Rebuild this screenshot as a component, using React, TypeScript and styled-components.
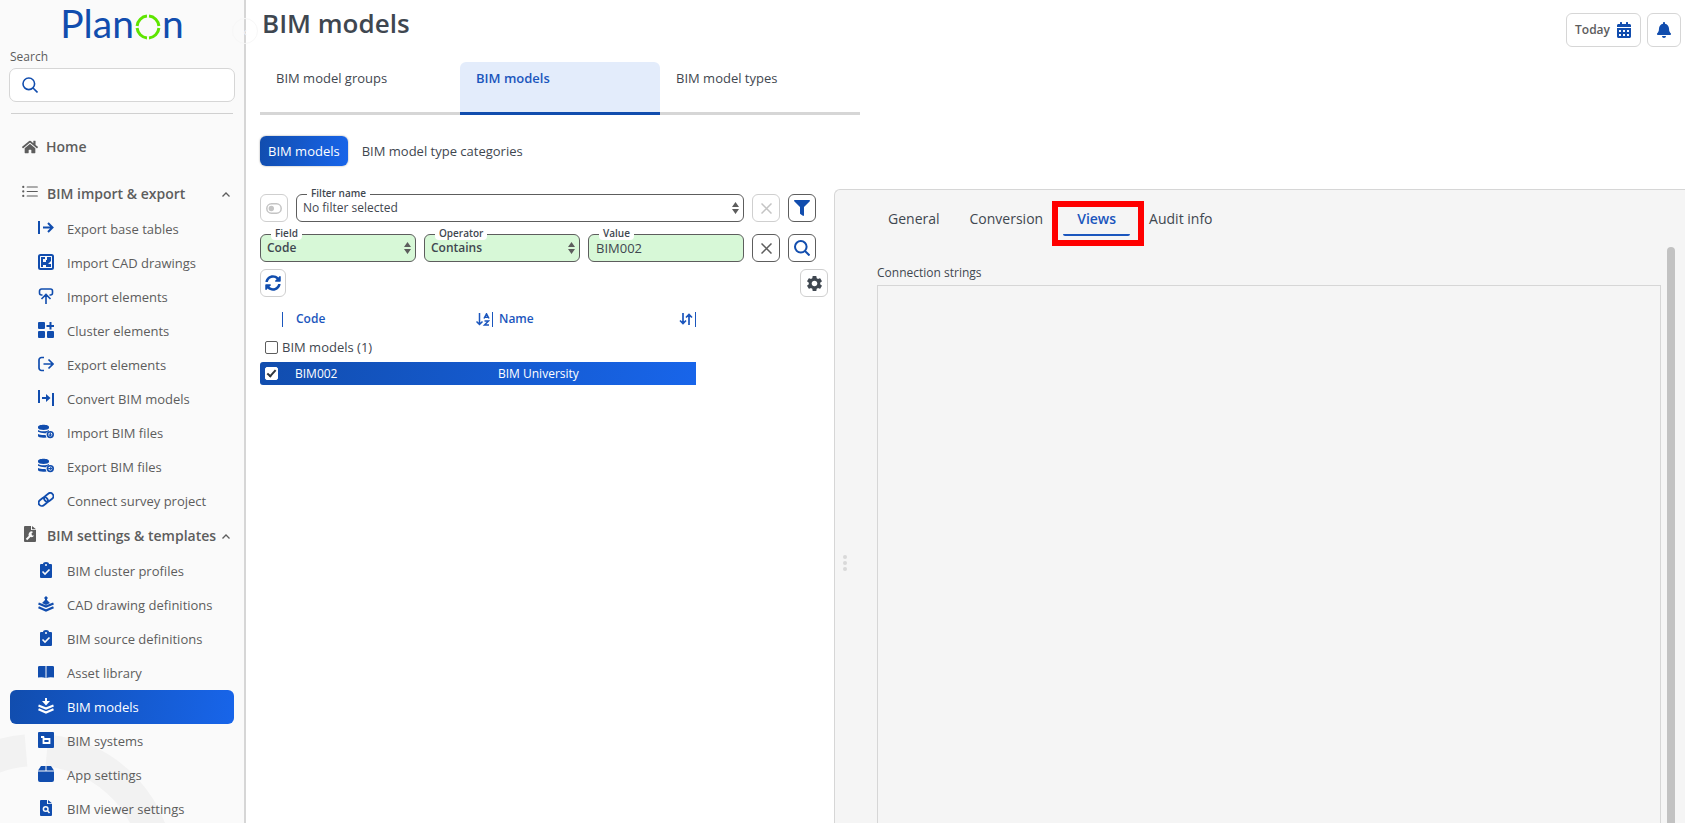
import React from 'react';
import styled, { createGlobalStyle, css } from 'styled-components';
import { FaBell, FaCalendarAlt, FaFilter, FaHome, FaSyncAlt } from 'react-icons/fa';
import { BsListUl } from 'react-icons/bs';
import { MdSettings } from 'react-icons/md';

const blue = '#114dae';
const gradient = 'linear-gradient(100deg, #114dae, #1865ea)';

const GlobalStyle = createGlobalStyle`
  *, *::before, *::after { box-sizing: border-box; }
  body { margin: 0; background: #fff; color: #3f4750; font: 13px/18px "Open Sans", "Liberation Sans", sans-serif; }
  button, input, select, textarea { font: inherit; color: inherit; margin: 0; }
  a { color: inherit; text-decoration: none; }
  svg { display: block; flex: none; }
`;

const Shell = styled.div`
  display: grid;
  grid-template-columns: 246px minmax(0, 1fr);
  height: 100vh;
  overflow: hidden;
`;

/* ---------- sidebar ---------- */
const Sidebar = styled.aside`
  position: relative;
  z-index: 0;
  min-height: 0;
  padding: 0 9px;
  background: #fafafa;
  border-right: 2px solid #d6d6d6;
  color: #5d5d5d;
`;
const Watermark = styled.svg`
  position: absolute;
  z-index: -1;
  left: 0;
  bottom: 0;
`;
const Collapse = styled.button`
  position: absolute;
  top: 18px;
  right: -14px;
  width: 26px;
  height: 26px;
  padding: 0;
  border: 1px solid #f7f7f7;
  border-radius: 50%;
  background: transparent;
  color: #f0f0f8;
  line-height: 20px;
`;
const Logo = styled.a`
  display: flex;
  justify-content: center;
  height: 48px;
  color: ${blue};
  font: 39px/47px Lato, sans-serif;
`;
const RingHolder = styled.span`
  padding: 14px 1px 0;
`;
const SearchLabel = styled.label`
  display: block;
  margin: 0 0 2px 1px;
  font-size: 12px;
`;
const SearchBox = styled.div`
  display: flex;
  align-items: center;
  gap: 8px;
  height: 34px;
  padding: 0 12px;
  border: 1px solid #d6d6d6;
  border-radius: 7px;
  background: #fff;
  color: ${blue};
  input { flex: 1; min-width: 0; border: 0; outline: 0; background: none; }
`;
const Divider = styled.hr`
  margin: 11px 2px 15px;
  border: 0;
  border-top: 1px solid #d0d0d0;
`;
const HomeLink = styled.a`
  display: flex;
  align-items: center;
  gap: 8px;
  height: 36px;
  margin-bottom: 11px;
  padding-left: 13px;
  font-size: 14px;
  font-weight: 600;
`;
const GroupButton = styled.button`
  display: flex;
  align-items: center;
  width: 100%;
  height: 36px;
  padding: 0 5px 0 12px;
  border: 0;
  background: none;
  font-size: 14px;
  font-weight: 600;
  text-align: left;
  white-space: nowrap;
`;
const GroupIcon = styled.span`
  display: flex;
  justify-content: center;
  width: 18px;
  margin: 0 8px 4px 0;
`;
const GroupName = styled.span`
  flex: 1;
`;
const NavList = styled.ul`
  margin: 0 1px;
  padding: 0;
  list-style: none;
`;
const NavLink = styled.a<{ $active?: boolean }>`
  display: flex;
  align-items: center;
  gap: 13px;
  height: 34px;
  padding-left: 28px;
  border-radius: 6px;
  white-space: nowrap;
  svg { color: ${blue}; margin-bottom: 2px; }
  ${(p) => p.$active && css`
    background: ${gradient};
    color: #fff;
    font-weight: 500;
    svg { color: #fff; }
  `}
`;

/* ---------- header ---------- */
const Main = styled.main`
  display: flex;
  flex-direction: column;
  min-height: 0;
`;
const Header = styled.header`
  display: flex;
  justify-content: space-between;
  height: 62px;
  padding: 5px 4px 0 16px;
`;
const Title = styled.h1`
  margin: 0;
  font-size: 26px;
  line-height: 36px;
  font-weight: 600;
`;
const HeaderActions = styled.div`
  display: flex;
  gap: 6px;
  padding-top: 8px;
`;
const HeaderButton = styled.button`
  display: flex;
  align-items: center;
  justify-content: center;
  gap: 6px;
  min-width: 34px;
  height: 34px;
  padding: 0 8px;
  border: 1px solid #d6d6d6;
  border-radius: 6px;
  background: #fff;
  color: #5d5d5d;
  font-size: 12px;
  font-weight: 600;
  svg { color: ${blue}; }
`;
const Tabs = styled.nav`
  display: flex;
  margin-left: 14px;
`;
const Tab = styled.a<{ $active?: boolean }>`
  width: 200px;
  height: 53px;
  padding: 7px 16px;
  border-bottom: 3px solid #d6d6d6;
  ${(p) => p.$active && css`
    border-color: ${blue};
    border-radius: 6px 6px 0 0;
    background: #e3ecfb;
    color: #1b56bd;
    font-weight: 600;
  `}
`;
const SubTabs = styled.nav`
  display: flex;
  gap: 6px;
  margin: 21px 0 23px 14px;
`;
const SubTab = styled.a<{ $active?: boolean }>`
  height: 30px;
  padding: 6px 8px;
  border-radius: 6px;
  ${(p) => p.$active && css`
    background: ${gradient};
    box-shadow: 0 0 2px #999;
    color: #fff;
    font-weight: 500;
  `}
`;
const Split = styled.div`
  display: grid;
  grid-template-columns: 588px minmax(0, 1fr);
  flex: 1;
  min-height: 0;
`;

/* ---------- list pane ---------- */
const ListPane = styled.section`
  padding: 5px 6px 0 14px;
`;
const FilterRow = styled.div`
  display: flex;
  gap: 8px;
  margin: 0 12px 12px 0;
`;
const SquareButton = styled.button<{ $light?: boolean; $width?: number }>`
  display: flex;
  align-items: center;
  justify-content: center;
  flex: none;
  width: ${(p) => p.$width ?? 28}px;
  height: 28px;
  padding: 0;
  border: 1px solid ${(p) => (p.$light ? '#cfcfcf' : '#5d5d5d')};
  border-radius: 6px;
  background: #fff;
  color: ${blue};
`;
const Field = styled.div<{ $green?: boolean }>`
  position: relative;
  flex: 1 1 0;
  min-width: 0;
  height: 28px;
  label {
    position: absolute;
    top: -8px;
    left: 11px;
    padding: 0 4px;
    border-radius: 4px;
    background: #fff;
    font-size: 10px;
    font-weight: 600;
    line-height: 14px;
  }
  select, input {
    display: block;
    width: 100%;
    height: 28px;
    padding: 0 6px;
    border: 1px solid #5d5d5d;
    border-radius: 6px;
    background: ${(p) => (p.$green ? '#d7f8d7' : '#fff')};
    font-size: 12px;
    font-weight: ${(p) => (p.$green ? 600 : 400)};
    outline: 0;
    appearance: none;
  }
  input { padding: 0 7px; font-size: 13px; font-weight: 400; }
  svg { position: absolute; right: 5px; top: 8px; pointer-events: none; }
`;
const ToolRow = styled.div`
  display: flex;
  justify-content: space-between;
  margin: -5px 0 9px;
`;
const ListTable = styled.table`
  width: 436px;
  border-collapse: collapse;
  table-layout: fixed;
  font-size: 12px;
  th { padding: 0; color: #1b56bd; font-weight: 600; text-align: left; height: 26px; }
  td { padding: 0; }
`;
const HeadCell = styled.div<{ $pad?: number }>`
  display: flex;
  align-items: center;
  justify-content: space-between;
  height: 15px;
  padding: 0 2px 0 ${(p) => p.$pad ?? 0}px;
  border-right: 1px solid #1b56bd;
`;
const GroupRow = styled.tr`
  height: 30px;
  font-size: 13px;
  label { display: flex; align-items: center; gap: 4px; padding-left: 5px; }
`;
const SelectedRow = styled.tr`
  height: 23px;
  background: ${gradient};
  color: #fff;
  font-weight: 500;
  td { padding-left: 12px; }
  td:first-child { padding-left: 5px; border-radius: 3px 0 0 3px; }
  td:last-child { padding-left: 5px; }
`;
const Check = styled.input`
  display: block;
  width: 13px;
  height: 13px;
  border: 1px solid #5d5d5d;
  border-radius: 2px;
  background: #fff;
  appearance: none;
  &:checked {
    border-color: #fff;
    background: #fff;
  }
  &:checked::before {
    content: '';
    display: block;
    width: 9px;
    height: 5px;
    margin: 2px 1px;
    border: solid #30363c;
    border-width: 0 0 2px 2px;
    transform: rotate(-48deg);
  }
`;

/* ---------- detail pane ---------- */
const DetailPane = styled.section`
  display: grid;
  grid-template-columns: 42px minmax(0, 1fr) 24px;
  grid-template-rows: 57px minmax(0, 1fr);
  border: solid #d6d6d6;
  border-width: 1px 0 0 1px;
  border-radius: 6px 0 0 0;
  background: #f5f5f5;
`;
const Splitter = styled.div`
  grid-row: 1 / 3;
  display: flex;
  flex-direction: column;
  align-items: center;
  gap: 2px;
  width: 20px;
  padding-top: 365px;
  i { width: 4px; height: 4px; border-radius: 50%; background: #d9d9d9; }
`;
const DetailTabs = styled.nav`
  grid-column: 2 / 4;
  display: flex;
  gap: 2px;
  padding: 16px 0 0;
  margin-left: -3px;
  font-size: 14px;
`;
const DetailTab = styled.a<{ $active?: boolean }>`
  position: relative;
  height: 30px;
  padding: 4px 14px;
  white-space: nowrap;
  ${(p) => p.$active && css`
    margin: 0 3px 0 4px;
    border-bottom: 2px solid #1b56bd;
    border-radius: 2px;
    color: #1b56bd;
    font-weight: 600;
  `}
`;
const Highlight = styled.span`
  position: absolute;
  top: -5px;
  left: -11px;
  right: -14px;
  height: 45px;
  border: 6px solid #f00;
  pointer-events: none;
`;
const DetailBody = styled.div`
  display: flex;
  flex-direction: column;
  padding-top: 17px;
  label { font-size: 12px; line-height: 18px; margin-bottom: 3px; }
  textarea {
    flex: 1;
    width: 100%;
    border: 1px solid #d6d6d6;
    border-bottom: 0;
    background: transparent;
    outline: 0;
    resize: none;
  }
`;
const Scrollbar = styled.div`
  width: 8px;
  margin-left: 6px;
  border-radius: 4px 4px 0 0;
  background: #c2c2c2;
`;

/* ---------- icons ---------- */
const Icon = ({ children }: { children: React.ReactNode }) => (
  <svg width="16" height="16" viewBox="0 0 16 16" fill="none" stroke="currentColor" strokeWidth="2" aria-hidden="true">
    {children}
  </svg>
);
const solid = { fill: 'currentColor', stroke: 'none' };

const ExportBaseIcon = () => (
  <Icon><path d="M1 1v13M5 7.500h9M10 3 14.500 7.500 10 12" /></Icon>
);
const CadIcon = () => (
  <Icon>
    <rect x="1" y="1" width="14" height="14" rx="1.5" />
    <path {...solid} d="M3 3h4v2H5v3h3V6h1V3h4v4l-3 3h3v3H8v-2H5v2H3z" />
  </Icon>
);
const ImportElementsIcon = () => (
  <Icon>
    <path strokeWidth="1.6" d="M4.5 7H3.500a2 2 0 0 1-2-2V3a2 2 0 0 1 2-2h9a2 2 0 0 1 2 2v2a2 2 0 0 1-2 2h-1M8 16V6M3.500 11 8 6.500l4.500 4.500" />
  </Icon>
);
const ClusterIcon = () => (
  <Icon>
    <path {...solid} d="M1 0h5q1 0 1 1v5q0 1-1 1H1q-1 0-1-1V1q0-1 1-1zM1 9h5q1 0 1 1v5q0 1-1 1H1q-1 0-1-1v-5q0-1 1-1zM10 9h5q1 0 1 1v5q0 1-1 1h-5q-1 0-1-1v-5q0-1 1-1z" />
    <path d="M12.500 0v7.500M8.500 4H16" />
  </Icon>
);
const ExportElementsIcon = () => (
  <Icon><path strokeWidth="1.700" d="M6 1.500H3.500a2.500 2.500 0 0 0-2.500 2.500v8a2.500 2.500 0 0 0 2.500 2.500H6M5.500 8H15M10.500 3.500 15 8l-4.500 4.500" /></Icon>
);
const ConvertIcon = () => (
  <Icon>
    <path d="M1 0v13M15 3v13" />
    <path {...solid} d="M4 7h4V4l4.500 4L8 12V9H4z" />
  </Icon>
);
const DatabaseIcon = ({ down }: { down?: boolean }) => (
  <Icon>
    <path {...solid} d="M0 3c0-3 11-3 11 0v1c0 2.500-11 2.500-11 0zM0 6c2 1.800 9 1.800 11 0v1.200Q8.500 7.500 8 9.200Q3 9.500 0 7.800zM0 10c2 1 5 1.300 7.500 1l1 2.500C4 14 0 13.500 0 12z" />
    <circle cx="12.300" cy="10.600" r="2.900" strokeWidth="1.600" />
    <path {...solid} d={down ? 'M11.700 8.500h1.200v2h1.400l-2 2.300-2-2.300h1.400z' : 'M10.200 10h2V8.600l2.300 2-2.300 2v-1.400h-2z'} />
  </Icon>
);
const ChainIcon = () => (
  <Icon>
    <g transform="rotate(-38 8 7.500)" strokeWidth="1.800">
      <rect x="-.5" y="4.300" width="10" height="6.400" rx="3.200" />
      <rect x="6.500" y="4.300" width="10" height="6.400" rx="3.200" />
    </g>
  </Icon>
);
const FileWrenchIcon = () => (
  <Icon>
    <path {...solid} d="M3 0h6v4h5v11q0 1-1 1H3q-1 0-1-1V1q0-1 1-1zM10 0l4 3.300h-4z" />
    <path d="m4.500 13.500 5-5" stroke="#fafafa" />
    <path {...solid} fill="#fafafa" d="M11 6a2.800 2.800 0 1 0 1 3.500H9.500V7.500z" />
  </Icon>
);
const ClipboardIcon = () => (
  <Icon>
    <path {...solid} d="M3 2h2q0-2 3-2t3 2h2q1 0 1 1v12q0 1-1 1H3q-1 0-1-1V3q0-1 1-1z" />
    <circle cx="8" cy="3" r="1" fill="#fafafa" stroke="none" />
    <path d="m4.500 9.500 2.500 2.500L11.500 7.500" stroke="#fafafa" strokeWidth="1.600" />
  </Icon>
);
const LayersIcon = ({ up }: { up?: boolean }) => (
  <Icon>
    <path {...solid} d={up ? 'M8 0l2 2-1 1v1l3 3-4 2-4-2 3-3V3L6 2z' : 'M7 0h2v3h3L8 7.500 4 3h3z'} />
    <path strokeWidth="2.200" d="m.5 7.500 7.500 3 7.500-3M.5 11.200l7.500 3.300 7.500-3.300" />
  </Icon>
);
const BookIcon = () => (
  <Icon><path {...solid} d="M1.500 2h6v12q-2-1-7.500-.500V3q0-1 1.500-1zM8.500 2h6Q16 2 16 3v10.500q-5.500-.500-7.500.500z" /></Icon>
);
const SystemIcon = () => (
  <Icon>
    <rect {...solid} width="16" height="16" rx="1" />
    <path d="M3 5h3M5.500 4.500V11h6V7H6" stroke="#fff" strokeWidth="1.800" />
  </Icon>
);
const BoxIcon = () => (
  <Icon><path {...solid} d="M3 0h4.500v4.500H0zM8.500 0H13l3 4.500H8.500zM0 5.500h16V14q0 2-2 2H2q-2 0-2-2z" /></Icon>
);
const FileSearchIcon = () => (
  <Icon>
    <path {...solid} d="M3 0h6v4h5v11q0 1-1 1H3q-1 0-1-1V1q0-1 1-1zM10 0l4 3.300h-4z" />
    <circle cx="7.700" cy="9" r="2.300" stroke="#fafafa" strokeWidth="1.500" />
    <path d="m9.500 10.800 2 2.200" stroke="#fafafa" strokeWidth="1.500" />
  </Icon>
);
const ChevronUp = () => (
  <svg width="8" height="5" viewBox="0 0 8 5" fill="none" stroke="currentColor" strokeWidth="1.300"><path d="M.5 4.500 4 1l3.500 3.500" /></svg>
);
const Arrows = () => (
  <svg width="7" height="12" viewBox="0 0 7 12" fill="#5d5d5d"><path d="M0 5 3.500 0 7 5zM0 7h7l-3.500 5z" /></svg>
);
const Cross = ({ color }: { color: string }) => (
  <svg width="11" height="11" viewBox="0 0 11 11" stroke={color} strokeWidth="1.500"><path d="m.5.500 10 10m0-10-10 10" /></svg>
);
const ToggleIcon = () => (
  <svg width="16" height="11" viewBox="0 0 16 11" fill="none" stroke="#c4c4c4" strokeWidth="1.500">
    <rect x=".8" y=".8" width="14.400" height="9.400" rx="4.700" /><circle cx="5.300" cy="5.500" r="2.700" fill="#c4c4c4" stroke="none" />
  </svg>
);
const MagnifierIcon = ({ thin }: { thin?: boolean }) => (
  <Icon>
    <g strokeWidth={thin ? 1.6 : 2}><circle cx="6.800" cy="6.800" r="5.800" /><path d="m11 11 4.500 4.500" /></g>
  </Icon>
);
const SortAZ = () => (
  <svg width="14" height="13" viewBox="0 0 14 13" fill="none" stroke="currentColor" strokeWidth="1.500">
    <path d="M3.500 0v11M.5 8.500l3 3 3-3M8 5.500 10.500.800 13 5.500M9 4.200h3M8.500 8h4l-4 4h4.500" />
  </svg>
);
const SortBoth = () => (
  <svg width="14" height="12" viewBox="0 0 14 12" fill="none" stroke="currentColor" strokeWidth="1.700">
    <path d="M4 0v10.500M1 7.500l3 3 3-3M10 12V1.500M7 4.500l3-3 3 3" />
  </svg>
);
const LogoRing = () => (
  <svg width="26" height="26" viewBox="0 0 26 26" fill="none" stroke="#5ee500" strokeWidth="3">
    <path d="M14 2.100a11 11 0 0 1 9.900 9.900M23.900 14a11 11 0 0 1-9.900 9.900M12 23.900a11 11 0 0 1-9.900-9.900M2.100 12a11 11 0 0 1 9.900-9.900" />
  </svg>
);

const importExport: [string, React.ReactNode][] = [
  ['Export base tables', <ExportBaseIcon />],
  ['Import CAD drawings', <CadIcon />],
  ['Import elements', <ImportElementsIcon />],
  ['Cluster elements', <ClusterIcon />],
  ['Export elements', <ExportElementsIcon />],
  ['Convert BIM models', <ConvertIcon />],
  ['Import BIM files', <DatabaseIcon down />],
  ['Export BIM files', <DatabaseIcon />],
  ['Connect survey project', <ChainIcon />],
];
const settings: [string, React.ReactNode][] = [
  ['BIM cluster profiles', <ClipboardIcon />],
  ['CAD drawing definitions', <LayersIcon up />],
  ['BIM source definitions', <ClipboardIcon />],
  ['Asset library', <BookIcon />],
  ['BIM models', <LayersIcon />],
  ['BIM systems', <SystemIcon />],
  ['App settings', <BoxIcon />],
  ['BIM viewer settings', <FileSearchIcon />],
];

type NavGroupProps = {
  name: string;
  icon: React.ReactNode;
  items: [string, React.ReactNode][];
  active?: string;
};
const NavGroup = ({ name, icon, items, active }: NavGroupProps) => (
  <>
    <GroupButton>
      <GroupIcon>{icon}</GroupIcon>
      <GroupName>{name}</GroupName>
      <ChevronUp />
    </GroupButton>
    <NavList>
      {items.map(([text, itemIcon]) => (
        <li key={text}>
          <NavLink href="#" $active={text === active}>{itemIcon}{text}</NavLink>
        </li>
      ))}
    </NavList>
  </>
);

export default function App() {
  return (
    <Shell>
      <GlobalStyle />
      <Sidebar>
        <Watermark width="180" height="90" viewBox="0 0 180 90" fill="none" stroke="#f2f2f2" strokeWidth="32">
          <path d="M26 17.500A122 122 0 0 0-86 139M47 17.500A122 122 0 0 1 158 139" />
        </Watermark>
        <Collapse aria-label="Collapse menu">‹</Collapse>
        <Logo href="#" aria-label="Planon">Plan<RingHolder><LogoRing /></RingHolder>n</Logo>
        <SearchLabel htmlFor="search">Search</SearchLabel>
        <SearchBox><MagnifierIcon thin /><input id="search" /></SearchBox>
        <Divider />
        <HomeLink href="#"><FaHome size={16} />Home</HomeLink>
        <NavGroup name="BIM import & export" icon={<BsListUl size={18} />} items={importExport} />
        <NavGroup name="BIM settings & templates" icon={<FileWrenchIcon />} items={settings} active="BIM models" />
      </Sidebar>
      <Main>
        <Header>
          <Title>BIM models</Title>
          <HeaderActions>
            <HeaderButton>Today<FaCalendarAlt size={16} /></HeaderButton>
            <HeaderButton aria-label="Notifications"><FaBell size={16} /></HeaderButton>
          </HeaderActions>
        </Header>
        <Tabs>
          <Tab href="#">BIM model groups</Tab>
          <Tab href="#" $active>BIM models</Tab>
          <Tab href="#">BIM model types</Tab>
        </Tabs>
        <SubTabs>
          <SubTab href="#" $active>BIM models</SubTab>
          <SubTab href="#">BIM model type categories</SubTab>
        </SubTabs>
        <Split>
          <ListPane>
            <FilterRow>
              <SquareButton $light aria-label="Toggle filter"><ToggleIcon /></SquareButton>
              <Field>
                <select id="filter"><option>No filter selected</option></select>
                <label htmlFor="filter">Filter name</label><Arrows />
              </Field>
              <SquareButton $light aria-label="Clear filter" disabled><Cross color="#c4c4c4" /></SquareButton>
              <SquareButton aria-label="Filter"><FaFilter size={16} /></SquareButton>
            </FilterRow>
            <FilterRow>
              <Field $green>
                <select id="field"><option>Code</option></select>
                <label htmlFor="field">Field</label><Arrows />
              </Field>
              <Field $green>
                <select id="operator"><option>Contains</option></select>
                <label htmlFor="operator">Operator</label><Arrows />
              </Field>
              <Field $green>
                <input id="value" defaultValue="BIM002" />
                <label htmlFor="value">Value</label>
              </Field>
              <SquareButton aria-label="Clear condition"><Cross color="#5d5d5d" /></SquareButton>
              <SquareButton aria-label="Search"><MagnifierIcon /></SquareButton>
            </FilterRow>
            <ToolRow>
              <SquareButton $light $width={26} aria-label="Refresh"><FaSyncAlt size={16} /></SquareButton>
              <SquareButton $light aria-label="Settings"><MdSettings size={19} color="#3f4750" /></SquareButton>
            </ToolRow>
            <ListTable>
              <colgroup><col style={{ width: 23 }} /><col style={{ width: 210 }} /><col /></colgroup>
              <thead>
                <tr>
                  <th><HeadCell /></th>
                  <th><HeadCell $pad={13}>Code<SortAZ /></HeadCell></th>
                  <th><HeadCell $pad={6}>Name<SortBoth /></HeadCell></th>
                </tr>
              </thead>
              <tbody>
                <GroupRow>
                  <td colSpan={3}><label><Check type="checkbox" />BIM models (1)</label></td>
                </GroupRow>
                <SelectedRow>
                  <td><Check type="checkbox" defaultChecked aria-label="Select BIM002" /></td>
                  <td>BIM002</td>
                  <td>BIM University</td>
                </SelectedRow>
              </tbody>
            </ListTable>
          </ListPane>
          <DetailPane>
            <Splitter><i /><i /><i /></Splitter>
            <DetailTabs>
              <DetailTab href="#">General</DetailTab>
              <DetailTab href="#">Conversion</DetailTab>
              <DetailTab href="#" $active>Views<Highlight /></DetailTab>
              <DetailTab href="#">Audit info</DetailTab>
            </DetailTabs>
            <DetailBody>
              <label htmlFor="connections">Connection strings</label>
              <textarea id="connections" readOnly />
            </DetailBody>
            <Scrollbar />
          </DetailPane>
        </Split>
      </Main>
    </Shell>
  );
}
